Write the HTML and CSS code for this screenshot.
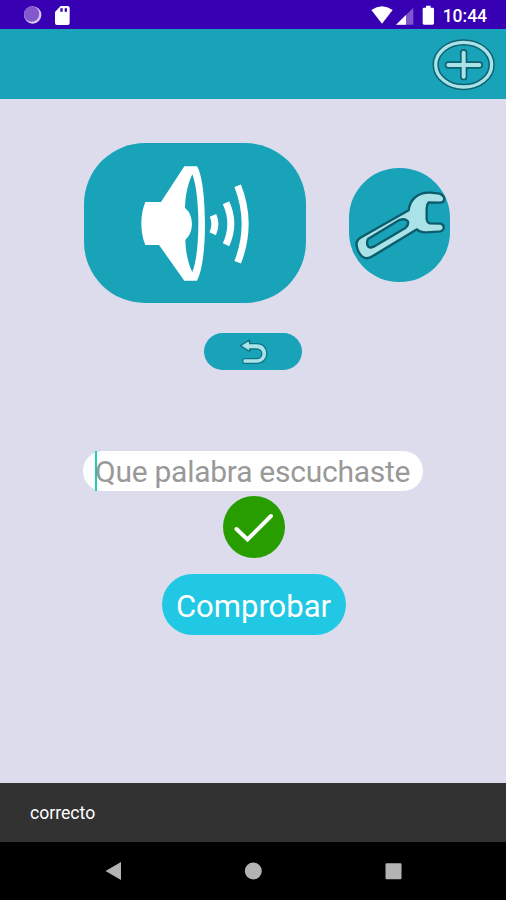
FILE: index.html
```html
<!DOCTYPE html>
<html lang="es">
<head>
<meta charset="utf-8">
<title>Escucha</title>
<link rel="stylesheet" href="styles.css">
</head>
<body>
<div class="screen">
  <header class="status">
    <svg class="status-left" viewBox="66 0 150 88">
      <circle cx="98" cy="45" r="26" fill="#dccdf5"/>
      <circle cx="95" cy="42" r="23" fill="#8358cd"/>
      <path d="M182 18H203Q209 18 209 24V69Q209 75 203 75H171Q165 75 165 69V36Z" fill="#fff"/>
      <path d="M181 25h7v10h-7zM194 25h7v10h-7z" fill="#3700b3"/>
    </svg>
    <svg class="status-right" viewBox="30 0 200 88">
      <path d="M34 30Q66 8 98 30L66 71Z" fill="#fff"/>
      <path d="M160 23V74H108Z" fill="#8055d0"/>
      <path d="M138 45V74H108Z" fill="#fff"/>
      <path d="M198 17h14v6h6q4 0 4 4v43q0 4-4 4h-26q-4 0-4-4V27q0-4 4-4h6z" fill="#fff"/>
    </svg>
    <span class="time">10:44</span>
  </header>
  <div class="appbar">
    <svg class="add" viewBox="216 114 192 158" fill="none" stroke-linecap="round">
      <ellipse cx="311" cy="194" rx="84" ry="67" stroke="#0e6272" stroke-width="19"/>
      <ellipse cx="311" cy="194" rx="84" ry="67" stroke="#a9e3e8" stroke-width="10"/>
      <path d="M311 158V230M265 195H358" stroke="#0e6272" stroke-width="22"/>
      <path d="M311 158V230M265 195H358" stroke="#a9e3e8" stroke-width="12"/>
    </svg>
  </div>
  <main class="content">
    <div class="sound-row">
      <button class="speaker" aria-label="Escuchar">
        <svg viewBox="27 24 666 480">
          <path fill="#fff" fill-rule="evenodd" d="M328 94H366C382 119 390 191 390 266C390 345 381 410 366 437H328L252 330H211C195 290 195 240 211 201H258ZM352 118C339 145 331 180 330 219C357 239 358 292 331 314C332 354 341 391 352 411C365 379 370 320 370 266C370 211 364 149 352 118Z"/>
          <path fill="none" stroke="#fff" stroke-width="21" d="M414 241Q426 268 413 296M453 203Q482 266 453 329M488 152Q533 266 488 382"/>
        </svg>
      </button>
      <button class="settings" aria-label="Ajustes">
        <svg viewBox="27 24 303 342">
          <path fill="#a9e3e8" fill-rule="evenodd" stroke="#0c5c6c" stroke-width="7" stroke-linejoin="round" d="M50 247Q53 237 65 231L206 151C210 115 237 96 272 98L299 101Q313 107 313 118Q312 127 301 128L266 127Q260 133 260 145V177Q261 188 269 190L303 191Q313 196 311 205Q307 215 294 215L260 217Q241 218 231 208L97 289Q79 301 65 288Q48 270 50 247ZM84 237L174 182Q192 173 203 183Q208 194 196 204L101 260Q87 267 82 255Q80 244 84 237Z"/>
          <path d="M97 240L178 192Q187 188 192 191L105 247Q97 251 93 248Z" fill="#19a3b9"/>
        </svg>
      </button>
    </div>
    <button class="undo" aria-label="Repetir">
      <svg viewBox="26 23 294 111" fill="none">
        <path d="M135 61L163 44V55H184C225 55 225 114 183 114H145Q139 108 145 100H183C205 100 205 71 183 71H163V79Z" fill="#a9e3e8" stroke="#0f7585" stroke-width="4" stroke-linejoin="round"/>
      </svg>
    </button>
    <div class="field"><span class="cursor"></span><span class="hint">Que palabra escuchaste</span></div>
    <svg class="ok" viewBox="0 0 62 62">
      <circle cx="31" cy="31" r="31" fill="#279d00"/>
      <path d="M13.5 33L24.5 43.5L48 20" fill="none" stroke="#fff" stroke-width="4" stroke-linecap="round"/>
    </svg>
    <button class="check">Comprobar</button>
  </main>
  <div class="snackbar">correcto</div>
  <nav class="nav">
    <svg viewBox="0 0 506 58" fill="#b3b3b3">
      <path d="M105.5 29L121 20V38Z"/>
      <circle cx="253.3" cy="29" r="8.5"/>
      <rect x="385.5" y="21.3" width="16" height="16" rx="1"/>
    </svg>
  </nav>
</div>
</body>
</html>
```
FILE: styles.css
```css
* { box-sizing: border-box; }
body { margin: 0; font-family: Roboto, sans-serif; }
button { border: 0; padding: 0; font: inherit; color: #fff; display: block; }
svg { display: block; }
.screen { width: 506px; height: 900px; display: flex; flex-direction: column; background: #dddced; overflow: hidden; }
.status { height: 29px; flex: none; background: #3700b3; display: flex; padding-left: 22px; }
.status-left { width: 50px; height: 29.33px; }
.status-right { width: 66.67px; height: 29.33px; margin-left: 298px; }
.time { margin-left: 6px; color: #fff; font-size: 17.5px; font-weight: 500; line-height: 32px; white-space: nowrap; }
.appbar { height: 70px; flex: none; background: #19a3b9; display: flex; justify-content: flex-end; padding: 9px 10px 0 0; }
.add { width: 64px; height: 52.67px; }
.content { flex: 1; display: flex; flex-direction: column; align-items: center; padding-top: 44px; }
.sound-row { align-self: stretch; display: flex; align-items: center; gap: 43px; padding-left: 84px; height: 160px; }
.speaker { width: 222px; height: 160px; border-radius: 61px; background: #19a3b9; overflow: hidden; }
.settings { width: 101px; height: 114px; border-radius: 50px; background: #19a3b9; margin-top: 4px; }
.settings svg, .speaker svg, .undo svg { width: 100%; height: 100%; }
.undo { width: 98px; height: 37px; border-radius: 19px; background: #19a3b9; margin-top: 30px; }
.field { width: 340px; height: 40px; border-radius: 20px; background: #fff; margin-top: 81px; display: flex; padding-left: 12px; }
.cursor { width: 2px; height: 40px; background: #1fd0b8; flex: none; }
.hint { color: #999; font-size: 30px; letter-spacing: -0.26px; line-height: 42px; white-space: nowrap; margin-left: -2px; }
.ok { width: 62px; height: 62px; margin: 5px 0 0 2px; }
.check { width: 184px; height: 61px; border-radius: 31px; background: #20c8e3; font-size: 31px; line-height: 65px; margin: 16px 0 0 1px; }
.snackbar { height: 59px; flex: none; background: #323232; color: #fff; font-size: 17.6px; line-height: 60px; padding-left: 30px; }
.nav { height: 58px; flex: none; background: #000; }
.nav svg { width: 506px; height: 58px; }
```
